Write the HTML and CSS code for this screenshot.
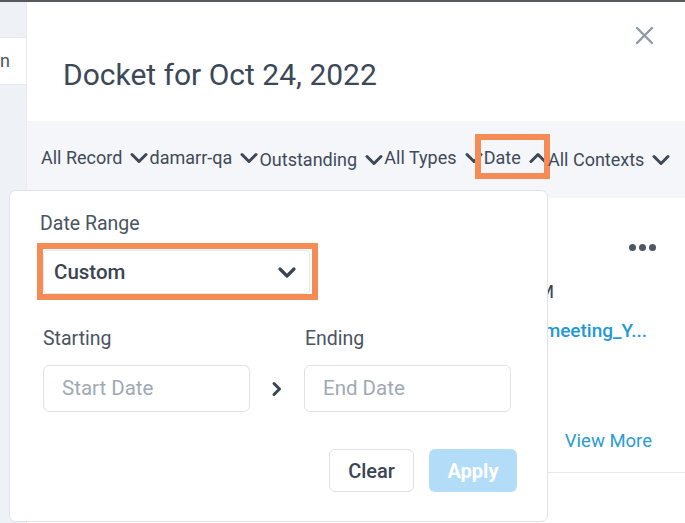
FILE: index.html
```html
<!DOCTYPE html>
<html lang="en">
<head>
<meta charset="utf-8">
<title>Docket</title>
<link rel="stylesheet" href="styles.css">
</head>
<body>
<div class="layout">
  <aside class="side">
    <div class="side-box">n</div>
  </aside>
  <main class="panel">
    <header class="panel-head">
      <h1 class="title">Docket for Oct 24, 2022</h1>
      <button class="close" aria-label="Close">
        <svg width="19" height="19" viewBox="0 0 19 19"><path d="M2 2 L17 17 M17 2 L2 17" stroke="#8d9aa8" stroke-width="2.4" stroke-linecap="round" fill="none"/></svg>
      </button>
    </header>
    <nav class="filters">
      <span class="filter">All Record <svg class="chev" width="18" height="12" viewBox="0 0 18 12"><path d="M2 2.5 L9 9.5 L16 2.5" stroke="#3d4858" stroke-width="3" fill="none" stroke-linecap="round" stroke-linejoin="round"/></svg></span>
      <span class="filter">damarr-qa <svg class="chev" width="18" height="12" viewBox="0 0 18 12"><path d="M2 2.5 L9 9.5 L16 2.5" stroke="#3d4858" stroke-width="3" fill="none" stroke-linecap="round" stroke-linejoin="round"/></svg></span>
      <span class="filter low">Outstanding <svg class="chev" width="18" height="12" viewBox="0 0 18 12"><path d="M2 2.5 L9 9.5 L16 2.5" stroke="#3d4858" stroke-width="3" fill="none" stroke-linecap="round" stroke-linejoin="round"/></svg></span>
      <span class="filter">All Types <svg class="chev" width="18" height="12" viewBox="0 0 18 12"><path d="M2 2.5 L9 9.5 L16 2.5" stroke="#3d4858" stroke-width="3" fill="none" stroke-linecap="round" stroke-linejoin="round"/></svg></span>
      <span class="filter date">Date <svg class="chev" width="18" height="12" viewBox="0 0 18 12"><path d="M2 9.5 L9 2.5 L16 9.5" stroke="#3d4858" stroke-width="3" fill="none" stroke-linecap="round" stroke-linejoin="round"/></svg><span class="annot annot-date"></span></span>
      <span class="filter low">All Contexts <svg class="chev" width="18" height="12" viewBox="0 0 18 12"><path d="M2 2.5 L9 9.5 L16 2.5" stroke="#3d4858" stroke-width="3" fill="none" stroke-linecap="round" stroke-linejoin="round"/></svg></span>
    </nav>
    <section class="list">
      <article class="item">
        <div class="item-top">
          <span class="dots"><i></i><i></i><i></i></span>
        </div>
        <div class="item-time">Oct 24, 2022 10:00 AM</div>
        <div class="item-name">Team_meeting_Y...</div>
        <div class="item-foot"><a class="more">View More</a></div>
      </article>
    </section>

    <div class="popover">
      <div class="label label-range">Date Range</div>
      <div class="select-wrap">
        <div class="select">
          <span>Custom</span>
          <svg width="20" height="13" viewBox="0 0 20 13"><path d="M3 3 L10 10 L17 3" stroke="#3a4452" stroke-width="3.2" fill="none" stroke-linecap="round" stroke-linejoin="round"/></svg>
        </div>
        <span class="annot annot-select"></span>
      </div>
      <div class="range-labels">
        <span class="label col">Starting</span>
        <span class="label col">Ending</span>
      </div>
      <div class="range-inputs">
        <div class="input">Start Date</div>
        <div class="sep"><svg width="12" height="16" viewBox="0 0 12 16"><path d="M3 2.5 L8.5 8 L3 13.5" stroke="#3a4452" stroke-width="3" fill="none" stroke-linecap="round" stroke-linejoin="round"/></svg></div>
        <div class="input">End Date</div>
      </div>
      <div class="actions">
        <button class="btn clear">Clear</button>
        <button class="btn apply">Apply</button>
      </div>
    </div>
  </main>
</div>
</body>
</html>
```

FILE: styles.css
```css
* { box-sizing: border-box; }
html, body { margin: 0; padding: 0; }
body {
  font-family: Roboto, "Noto Sans", Arial, sans-serif;
  background: #eef1f5;
  border-top: 2px solid #56595d;
  height: 523px;
  overflow: hidden;
  color: #3c4858;
}
.layout { display: flex; height: 521px; }
.side { width: 26px; flex: none; padding-top: 35px; }
.side-box {
  height: 48px;
  background: #fff;
  border-top: 1px solid #e4e7eb;
  border-bottom: 1px solid #e4e7eb;
  font-size: 18px;
  line-height: 46px;
  color: #4a5462;
  white-space: nowrap;
  padding-left: 0;
}
.panel {
  flex: 1;
  background: #fff;
  position: relative;
  border-left: 1px solid #e8ebef;
}
.panel-head {
  height: 119px;
  padding: 55px 0 0 36px;
  position: relative;
}
.title {
  margin: 0;
  font-size: 30px;
  line-height: 36px;
  font-weight: 400;
  color: #3c4858;
}
.close {
  position: absolute;
  top: 24px;
  right: 31px;
  border: 0;
  background: none;
  padding: 0;
  width: 19px;
  height: 19px;
}
.close svg { display: block; }
.filters {
  height: 77px;
  background: #f4f6f9;
  padding: 26px 0 0 14px;
  display: flex;
  align-items: flex-start;
  white-space: nowrap;
  font-size: 18px;
  line-height: 21px;
  color: #3f4a59;
}
.filter {
  display: inline-flex;
  align-items: center;
  gap: 8px;
  margin-right: 1.2px;
  position: relative;
}
.filter.low { margin-top: 2px; }
.chev { display: block; flex: none; }
.annot {
  position: absolute;
  border: 6px solid #f58b55;
  pointer-events: none;
}
.annot-date { left: -9px; top: -13px; width: 75px; height: 45px; }
.list { padding: 0; }
.item {
  height: 275px;
  border-bottom: 1px solid #e6e9ec;
  position: relative;
}
.item-top { height: 52px; padding: 46px 29px 0 0; display: flex; justify-content: flex-end; }
.dots { display: flex; gap: 3px; }
.dots i { width: 7px; height: 7px; border-radius: 50%; background: #4f5764; display: block; }
.item-time {
  width: 527px;
  text-align: right;
  font-size: 19px;
  line-height: 22px;
  margin-top: 31px;
  color: #3a4452;
  white-space: nowrap;
}
.item-name {
  width: 620px;
  text-align: right;
  font-size: 19px;
  font-weight: 500;
  line-height: 22px;
  margin-top: 17px;
  color: #1f9ad7;
  white-space: nowrap;
}
.item-foot { position: absolute; right: 33px; top: 233px; }
.more { font-size: 18.5px; color: #2a9bd6; line-height: 21px; }
.popover {
  position: absolute;
  left: -18px;
  top: 188px;
  width: 539px;
  height: 332px;
  background: #fff;
  border: 1px solid #dfe3e8;
  border-radius: 7px;
  padding: 22px 30px 0 33px;
}
.label { font-size: 19.5px; line-height: 21px; color: #4a5462; display: block; }
.label-range { margin-left: -3px; }
.select-wrap { position: relative; width: 267px; margin-top: 16px; }
.select {
  height: 44px;
  border: 1px solid #e6e9ed;
  border-radius: 4px;
  display: flex;
  align-items: center;
  justify-content: space-between;
  padding: 0 12px 0 10px;
  font-size: 20.5px;
  font-weight: 500;
  color: #3a4452;
}
.annot-select { left: -6px; top: -7px; right: -8px; bottom: -6px; }
.range-labels { display: flex; margin-top: 34px; }
.range-labels .col:first-child { width: 262px; }
.range-inputs { display: flex; margin-top: 16px; }
.input {
  width: 207px;
  height: 47px;
  border: 1px solid #dfe3e8;
  border-radius: 6px;
  padding-left: 18px;
  font-size: 20.5px;
  line-height: 45px;
  color: #a0aab5;
}
.sep { width: 54px; display: flex; align-items: center; justify-content: center; }
.sep svg { display: block; }
.actions { display: flex; justify-content: flex-end; gap: 15px; margin-top: 37px; }
.btn {
  height: 43px;
  border-radius: 6px;
  font-family: inherit;
  font-size: 20px;
  font-weight: 500;
}
.clear { width: 85px; background: #fff; border: 1px solid #dde1e6; color: #3a4452; }
.apply { width: 88px; background: #b3dcf8; border: 0; color: #fff; font-weight: 700; }
```
